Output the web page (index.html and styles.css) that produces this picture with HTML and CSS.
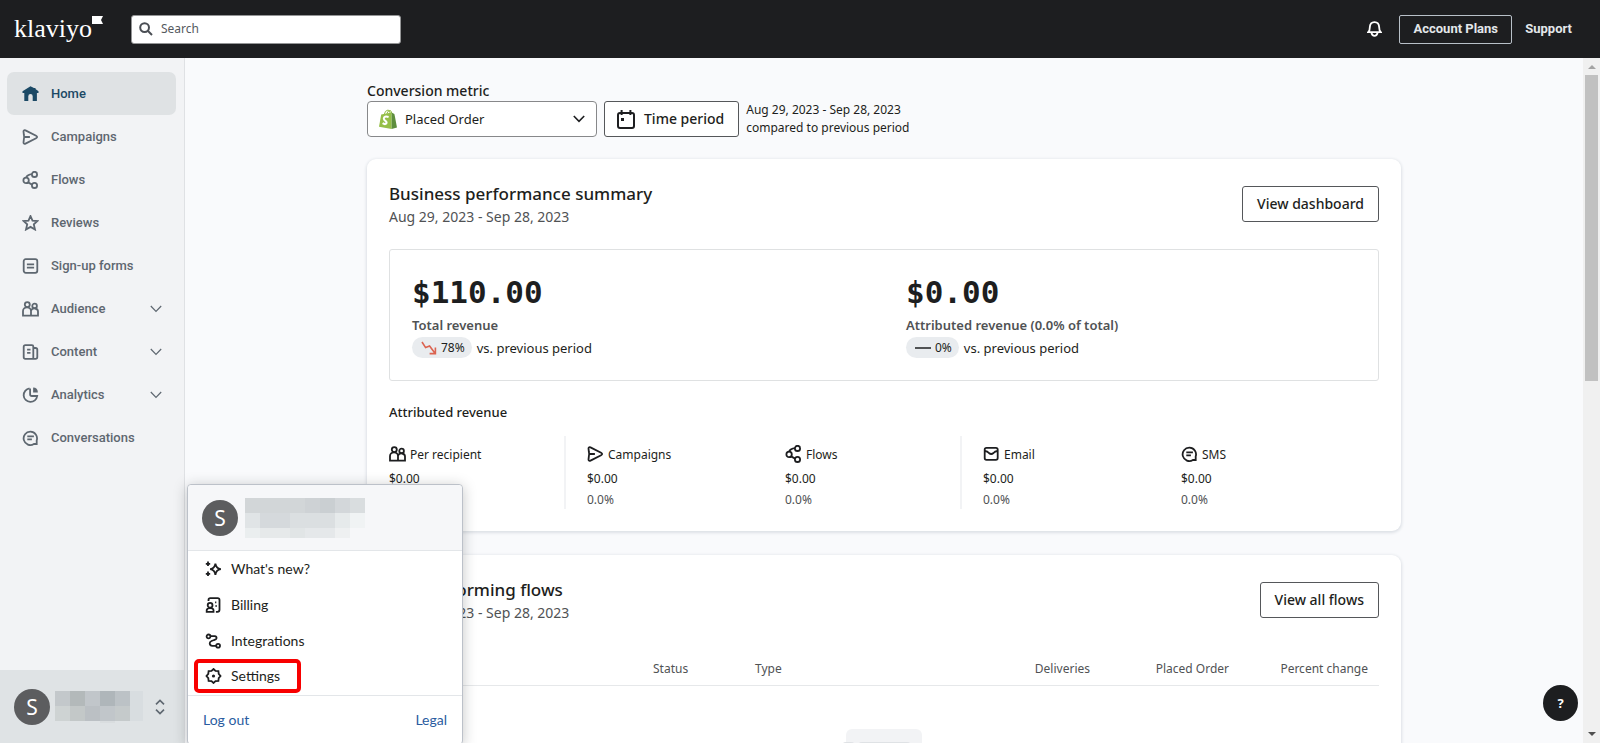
FILE: index.html
```html
<!DOCTYPE html>
<html lang="en">
<head>
    <meta charset="utf-8">
    <title>Home | Klaviyo</title>
    <link rel="stylesheet" href="styles.css">
</head>
<body>
    <!-- Icon sprite -->
    <svg class="sprite" aria-hidden="true">
        <symbol id="i-home" viewBox="0 0 16 16"><path d="M8 0.3 L11.5 2 H13 V3 L16 5.3 V7 H14.4 V15 H10.2 V10.2 a2.2 2.2 0 0 0 -4.4 0 V15 H1.8 V7 H0 V5.3 Z" fill="currentColor" stroke="none"/></symbol>
        <symbol id="i-send" viewBox="0 0 16 16"><path d="M1 2.4 C1 1.1 2 0.9 3 1.4 L13.6 6.8 C15 7.5 15 8.5 13.6 9.2 L3 14.6 C2 15.1 1 14.9 1 13.6 L1.4 10 C1.8 8.6 1.8 7.4 1.4 6 Z M1.8 8 H7.4"/></symbol>
        <symbol id="i-flows" viewBox="0 0 16 18"><circle cx="3.6" cy="9.4" r="2.7"/><circle cx="12" cy="3.4" r="2.6"/><circle cx="12" cy="14.4" r="2.6"/><path d="M3.6 6.6 Q5 3.6 9.4 3.2 M5.6 11.4 L9.6 13.6"/></symbol>
        <symbol id="i-star" viewBox="0 0 16 16"><path d="M8 1 L10 5.6 L15 6 L11.3 9.4 L12.5 14.5 L8 11.9 L3.5 14.5 L4.7 9.4 L1 6 L6 5.6 Z"/></symbol>
        <symbol id="i-form" viewBox="0 0 16 16"><rect x="1.2" y="1.2" width="13.6" height="13.6" rx="2"/><path d="M4.4 6.4 H11.6 M4.4 9.6 H11.6"/></symbol>
        <symbol id="i-people" viewBox="0 0 17 16"><circle cx="5.3" cy="3.6" r="2.5"/><circle cx="12.6" cy="4.9" r="2.3"/><path d="M1 14.6 V10 a4 3.6 0 0 1 8 0 V14.6 Z M9 14.6 H16 V10.8 a3.6 3.2 0 0 0 -7 -1.2"/></symbol>
        <symbol id="i-content" viewBox="0 0 16 16"><path d="M2.8 1.2 H9.4 Q10.8 1.2 10.8 2.6 V14.8 H2.8 Q1.2 14.8 1.2 13.2 V2.8 Q1.2 1.2 2.8 1.2 Z M10.8 4 H13 Q14.8 4 14.8 5.6 V13 Q14.8 14.8 13 14.8 H10.8 M4.6 5.6 H8 M4.6 8.8 H8"/></symbol>
        <symbol id="i-pie" viewBox="0 0 16 16"><path d="M7 1.4 A6.8 6.8 0 1 0 14.7 9 H9.4 Q7.6 9 7.6 7.2 V1.4"/><path d="M10.6 0.6 A5 5 0 0 1 15.4 5.4 H10.6 Z" fill="currentColor" stroke="none"/></symbol>
        <symbol id="i-chat" viewBox="0 0 16 16"><path d="M11.4 14 H14.2 V10.4 A6.7 6.7 0 1 0 11.4 14 Z M4.8 6.4 H11.4 M4.8 9.4 H9.4"/></symbol>
        <symbol id="i-mail" viewBox="0 0 16 16"><rect x="1.2" y="1.8" width="13" height="12" rx="1.8"/><path d="M1.4 5 Q4 5.2 5.4 7 Q7.7 9 10 7 Q11.4 5.2 14 5"/></symbol>
        <symbol id="i-down" viewBox="0 0 12 8"><path d="M0.8 1 L6 6.4 L11.2 1"/></symbol>
        <symbol id="i-sparkle" viewBox="0 0 17 16"><path d="M10.4 2.6 Q11 7.4 15.8 8.2 Q11 9 10.4 13.8 Q9.8 9 5.2 8.2 Q9.8 7.4 10.4 2.6 Z M3 0.6 V5 M0.8 2.8 H5.2 M3 10.6 V15 M0.8 12.8 H5.2"/></symbol>
        <symbol id="i-billing" viewBox="0 0 16 16"><path d="M3 4 V3 Q3 1.2 4.8 1.2 H12.2 Q14 1.2 14 3 V12.8 Q14 14.8 12 14.8 H10.4 M1.2 14.8 V13 Q1.6 11.2 4.6 11.2 Q7.8 11.2 8 13 V14.8 Z M9.6 5.4 H10.8 M10 9 H11.2"/><circle cx="4.6" cy="8.2" r="2.4"/></symbol>
        <symbol id="i-route" viewBox="0 0 16 16"><circle cx="3" cy="3.4" r="1.9"/><circle cx="12.6" cy="12.8" r="1.9"/><path d="M4.8 3.2 H9.2 Q11.4 3.4 11 5.4 Q10.8 6.6 8.6 7 L6 8 Q4 8.8 4.2 10.6 Q4.6 12.8 6.8 12.8 H10.6"/></symbol>
        <symbol id="i-gear" viewBox="0 0 16 16"><path d="M8 1 L10 2.8 L12.9 3 L13.2 5.9 L15 8 L13.2 10.1 L12.9 13 L10 13.2 L8 15 L6 13.2 L3.1 13 L2.8 10.1 L1 8 L2.8 5.9 L3.1 3 L6 2.8 Z"/><circle cx="8" cy="8" r="1.6" fill="currentColor" stroke="none"/></symbol>
    </svg>

    <header class="topbar">
        <a class="logo" href="#">klaviyo<svg class="logo-flag" viewBox="0 0 11 8"><path d="M0 0 H11 L9 4 L11 8 H0 Z" fill="#fff"/></svg></a>
        <label class="search">
            <svg class="search-icon" viewBox="0 0 14 14"><circle cx="5.6" cy="5.6" r="4.4"/><path d="M9 9 L13 13"/></svg>
            <input type="text" placeholder="Search" aria-label="Search">
        </label>
        <div class="topbar-right">
            <button class="bell" aria-label="Notifications">
                <svg viewBox="0 0 15 16"><path d="M1.2 11.2 Q2.8 9.8 2.8 6.4 Q3 1.2 7.5 1.2 Q12 1.2 12.2 6.4 Q12.2 9.8 13.8 11.2 Z M4.4 11.6 Q5 14.8 7.5 14.8 Q10 14.8 10.6 11.6"/></svg>
            </button>
            <button class="plans">Account Plans</button>
            <a class="support" href="#">Support</a>
        </div>
    </header>

    <div class="layout">
        <nav class="sidebar">
            <div class="nav-list">
                <a class="nav-item active" href="#"><svg class="icon"><use href="#i-home"/></svg>Home</a>
                <a class="nav-item" href="#"><svg class="icon"><use href="#i-send"/></svg>Campaigns</a>
                <a class="nav-item" href="#"><svg class="icon tall"><use href="#i-flows"/></svg>Flows</a>
                <a class="nav-item" href="#"><svg class="icon"><use href="#i-star"/></svg>Reviews</a>
                <a class="nav-item" href="#"><svg class="icon"><use href="#i-form"/></svg>Sign-up forms</a>
                <button class="nav-item"><svg class="icon"><use href="#i-people"/></svg>Audience<svg class="chevron"><use href="#i-down"/></svg></button>
                <button class="nav-item"><svg class="icon"><use href="#i-content"/></svg>Content<svg class="chevron"><use href="#i-down"/></svg></button>
                <button class="nav-item"><svg class="icon"><use href="#i-pie"/></svg>Analytics<svg class="chevron"><use href="#i-down"/></svg></button>
                <a class="nav-item" href="#"><svg class="icon"><use href="#i-chat"/></svg>Conversations</a>
            </div>
            <button class="account" aria-label="Account menu">
                <span class="avatar">S</span>
                <svg class="account-name" viewBox="0 0 88 32">
                    <path d="M0 0h15v15H0z" fill="#c3c8cb"/><path d="M15 0h15v15H15z" fill="#b3b9ba"/><path d="M30 0h15v15H30z" fill="#c1c6ca"/><path d="M45 0h15v15H45z" fill="#afb6ba"/><path d="M60 0h15v15H60z" fill="#bcc2c6"/><path d="M75 0h13v30H75z" fill="#d8dde0"/>
                    <path d="M0 15h15v15H0z" fill="#ced3d3"/><path d="M15 15h15v15H15z" fill="#c3c8c8"/><path d="M30 15h15v15H30z" fill="#bbc0c4"/><path d="M45 15h15v15H45z" fill="#c1c6ca"/><path d="M60 15h15v15H60z" fill="#c5cacb"/><path d="M45 30h15v2H45z" fill="#d9dddf"/>
                </svg>
                <svg class="updown" viewBox="0 0 10 16"><path d="M1 5.4 L5 1.4 L9 5.4 M1 10.6 L5 14.6 L9 10.6"/></svg>
            </button>
        </nav>

        <main class="main">
            <div class="content">
                <div class="filters">
                    <div class="filter-metric">
                        <label for="metric">Conversion metric</label>
                        <div class="select-box">
                            <svg class="shopify" viewBox="0 0 18 20">
                                <path d="M5 6 Q6 1.2 9 1 Q11 1 11.4 5" fill="none" stroke="#95bf47" stroke-width="1"/>
                                <path d="M7.6 5.6 Q8.4 1.6 11 1.4 Q12.6 1.8 12.8 4.6" fill="none" stroke="#95bf47" stroke-width="1"/>
                                <path d="M2.2 5.6 L12.6 3.6 V20 L0 17.8 Z" fill="#95bf47"/>
                                <path d="M12.6 3.6 L15.4 5 L18 18.6 L12.6 20 Z" fill="#5e8e3e"/>
                                <path d="M9.6 8 Q5 6.6 4.8 9.6 Q4.8 10.8 6.4 11.8 Q8.2 13 7.2 14.6 Q6 15.8 3.6 14.2" fill="none" stroke="#fff" stroke-width="2"/>
                            </svg>
                            <select id="metric">
                                <option>Placed Order</option>
                            </select>
                            <svg class="select-arrow"><use href="#i-down"/></svg>
                        </div>
                    </div>
                    <button class="btn">
                        <svg class="calendar" viewBox="0 0 18 19"><rect x="1" y="3" width="16" height="15" rx="2"/><path d="M4.6 0 V5 M13.4 0 V5"/><path d="M4 8h3v3H4z" fill="currentColor" stroke="none"/></svg>
                        Time period
                    </button>
                    <p class="period">Aug 29, 2023 - Sep 28, 2023<br>compared to previous period</p>
                </div>

                <section class="card">
                    <div class="card-head">
                        <div>
                            <h2>Business performance summary</h2>
                            <p class="dates">Aug 29, 2023 - Sep 28, 2023</p>
                        </div>
                        <button class="btn">View dashboard</button>
                    </div>
                    <div class="totals">
                        <div class="total">
                            <div class="amount">$110.00</div>
                            <div class="total-label">Total revenue</div>
                            <div class="compare">
                                <span class="badge"><svg class="trend down" viewBox="0 0 16 14"><path d="M1 1 L4.6 6.6 L8.6 5 L13.6 11.8 M14.4 6.4 V12.6 H8.6"/></svg>78%</span>
                                vs. previous period
                            </div>
                        </div>
                        <div class="total">
                            <div class="amount">$0.00</div>
                            <div class="total-label">Attributed revenue (0.0% of total)</div>
                            <div class="compare">
                                <span class="badge"><svg class="trend" viewBox="0 0 16 14"><path d="M0 7 H16"/></svg>0%</span>
                                vs. previous period
                            </div>
                        </div>
                    </div>
                    <h3>Attributed revenue</h3>
                    <div class="channels">
                        <div class="channel divided">
                            <div class="channel-name"><svg class="icon"><use href="#i-people"/></svg>Per recipient</div>
                            <div>$0.00</div>
                        </div>
                        <div class="channel">
                            <div class="channel-name"><svg class="icon"><use href="#i-send"/></svg>Campaigns</div>
                            <div>$0.00</div>
                            <div class="share">0.0%</div>
                        </div>
                        <div class="channel divided">
                            <div class="channel-name"><svg class="icon tall"><use href="#i-flows"/></svg>Flows</div>
                            <div>$0.00</div>
                            <div class="share">0.0%</div>
                        </div>
                        <div class="channel">
                            <div class="channel-name"><svg class="icon"><use href="#i-mail"/></svg>Email</div>
                            <div>$0.00</div>
                            <div class="share">0.0%</div>
                        </div>
                        <div class="channel">
                            <div class="channel-name"><svg class="icon"><use href="#i-chat"/></svg>SMS</div>
                            <div>$0.00</div>
                            <div class="share">0.0%</div>
                        </div>
                    </div>
                </section>

                <section class="card">
                    <div class="card-head">
                        <div>
                            <h2>Top performing flows</h2>
                            <p class="dates">Aug 29, 2023 - Sep 28, 2023</p>
                        </div>
                        <button class="btn">View all flows</button>
                    </div>
                    <table class="flows">
                        <thead>
                            <tr>
                                <th class="col-name">Flow</th>
                                <th class="col-status">Status</th>
                                <th>Type</th>
                                <th class="num">Deliveries</th>
                                <th class="num">Placed Order</th>
                                <th class="num">Percent change</th>
                            </tr>
                        </thead>
                    </table>
                    <svg class="empty" viewBox="0 0 84 60"><rect x="4" width="76" height="60" rx="6" fill="#f2f3f5"/><rect y="13" width="13" height="12" rx="4" fill="#dfe2e5"/><rect x="16" y="13" width="53" height="12" rx="4" fill="#dfe2e5"/></svg>
                </section>
            </div>
            <button class="help" aria-label="Help">?</button>
        </main>

        <div class="scrollbar">
            <svg class="arrow up" viewBox="0 0 8 4"><path d="M0 4 L4 0 L8 4 Z"/></svg>
            <div class="thumb"></div>
            <svg class="arrow" viewBox="0 0 8 4"><path d="M0 0 L4 4 L8 0 Z"/></svg>
        </div>
    </div>

    <div class="menu">
        <div class="menu-head">
            <span class="avatar">S</span>
            <svg class="menu-name" viewBox="0 0 120 40">
                <path d="M0 0h60v15H0z" fill="#d2d6d8"/><path d="M60 0h15v15H60z" fill="#ced2d5"/><path d="M75 0h15v15H75z" fill="#cacfd2"/><path d="M90 0h15v15H90z" fill="#d3d7da"/><path d="M105 0h15v15h-15z" fill="#d9dddf"/>
                <path d="M0 15h15v15H0z" fill="#e0e4e6"/><path d="M15 15h30v15H15z" fill="#d5d9dc"/><path d="M45 15h45v15H45z" fill="#dbdfe1"/><path d="M90 15h15v15H90z" fill="#e6eaeb"/><path d="M105 15h15v15h-15z" fill="#f0f3f4"/>
                <path d="M0 30h15v10H0z" fill="#eaeeef"/><path d="M15 30h30v10H15z" fill="#e6e9ea"/><path d="M45 30h15v10H45z" fill="#e1e5e6"/><path d="M60 30h30v10H60z" fill="#e5e8ea"/><path d="M90 30h15v10H90z" fill="#eef0f1"/>
            </svg>
        </div>
        <div class="menu-list">
            <a href="#"><svg class="icon"><use href="#i-sparkle"/></svg>What's new?</a>
            <a href="#"><svg class="icon"><use href="#i-billing"/></svg>Billing</a>
            <a href="#"><svg class="icon"><use href="#i-route"/></svg>Integrations</a>
            <a class="highlight" href="#"><svg class="icon"><use href="#i-gear"/></svg>Settings</a>
        </div>
        <div class="menu-foot">
            <a href="#">Log out</a>
            <a href="#">Legal</a>
        </div>
    </div>
</body>
</html>
```
FILE: styles.css
```css
* {
    box-sizing: border-box;
}

body {
    margin: 0;
    height: 100vh;
    display: flex;
    flex-direction: column;
    position: relative;
    overflow: hidden;
    font-family: "Noto Sans", sans-serif;
    font-size: 13px;
    line-height: 20px;
    color: #1d1e20;
    background: #f9fafc;
}

h2, h3, p {
    margin: 0;
}

a {
    color: inherit;
    text-decoration: none;
}

button {
    font: inherit;
    color: inherit;
    cursor: pointer;
}

svg {
    flex: none;
    fill: none;
    stroke: none;
}

.sprite {
    position: absolute;
    width: 0;
    height: 0;
}

.icon {
    width: 17px;
    height: 16px;
    stroke: currentColor;
    stroke-width: 1.8;
}

.icon.tall {
    height: 18px;
}

/* Top bar */
.topbar {
    flex: none;
    height: 58px;
    display: flex;
    align-items: center;
    padding: 0 28px 0 14px;
    background: #1d1e20;
    color: #fff;
}

.logo {
    display: flex;
    width: 117px;
    font-family: "Liberation Serif", serif;
    font-size: 26px;
    line-height: 26px;
}

.logo-flag {
    width: 11px;
    height: 8px;
}

.search {
    display: flex;
    align-items: center;
    gap: 8px;
    width: 270px;
    height: 29px;
    padding: 0 7px;
    background: #fff;
    border: 1px solid #949596;
    border-radius: 3px;
}

.search-icon {
    width: 14px;
    height: 14px;
    stroke: #4a4e54;
    stroke-width: 2;
}

.search input {
    flex: 1;
    min-width: 0;
    padding: 0;
    border: 0;
    outline: 0;
    font: inherit;
    font-size: 12px;
}

.search input::placeholder {
    color: #55595e;
}

.topbar-right {
    display: flex;
    align-items: center;
    gap: 13px;
    margin-left: auto;
    font-family: Roboto, sans-serif;
    font-weight: 700;
    color: #e3e7ea;
}

.bell {
    display: flex;
    padding: 0;
    margin-right: 4px;
    border: 0;
    background: none;
}

.bell svg {
    width: 15px;
    height: 16px;
    stroke: #fff;
    stroke-width: 1.8;
}

.plans {
    width: 113px;
    height: 29px;
    padding: 0;
    border: 1px solid #b8c0c8;
    border-radius: 2px;
    background: none;
}

/* Sidebar */
.layout {
    flex: 1;
    min-height: 0;
    display: flex;
}

.sidebar {
    flex: none;
    width: 185px;
    display: flex;
    flex-direction: column;
    justify-content: space-between;
    background: #f2f3f5;
    border-right: 1px solid #dfe1e4;
    font-family: Roboto, sans-serif;
}

.nav-list {
    display: flex;
    flex-direction: column;
    padding: 14px 8px 0 7px;
}

.nav-item {
    display: flex;
    align-items: center;
    gap: 12px;
    height: 43px;
    padding: 0 14px 0 15px;
    border: 0;
    border-radius: 7px;
    background: none;
    color: #5e6770;
    font-weight: 500;
}

.nav-item.active {
    background: #dfe2e4;
    color: #1b4965;
}

.chevron {
    width: 12px;
    height: 8px;
    margin-left: auto;
    stroke: #5e6770;
    stroke-width: 1.2;
}

.account {
    display: flex;
    align-items: center;
    height: 73px;
    padding: 0 14px;
    border: 0;
    background: #dfe3e5;
}

.avatar {
    flex: none;
    width: 36px;
    height: 36px;
    border-radius: 50%;
    background: #5c5d5f;
    color: #fff;
    font-family: "Noto Sans", sans-serif;
    font-size: 21px;
    line-height: 36px;
    text-align: center;
}

.account-name {
    width: 88px;
    height: 32px;
    margin-left: 5px;
}

.updown {
    width: 10px;
    height: 16px;
    margin-left: 12px;
    stroke: #5e6770;
    stroke-width: 1.6;
}

/* Main column */
.main {
    flex: 1;
    min-width: 0;
    position: relative;
    overflow: hidden;
}

.content {
    max-width: 1034px;
    margin: 0 auto;
    padding-top: 22px;
}

.filters {
    display: flex;
    align-items: flex-end;
    gap: 7px;
    margin-bottom: 22px;
}

.filter-metric label {
    display: block;
    line-height: 21px;
    font-weight: 500;
    font-size: 14px;
}

.select-box {
    display: flex;
    align-items: center;
    gap: 8px;
    width: 230px;
    height: 36px;
    padding: 0 11px;
    border: 1px solid #87888a;
    border-radius: 4px;
    background: #fff;
}

.shopify {
    width: 18px;
    height: 20px;
}

.select-box select {
    flex: 1;
    min-width: 0;
    padding: 0;
    border: 0;
    appearance: none;
    background: none;
    font: inherit;
    font-size: 13px;
    color: inherit;
}

.select-arrow {
    width: 12px;
    height: 8px;
    stroke: #1d1e20;
    stroke-width: 1.6;
}

.btn {
    display: flex;
    align-items: center;
    gap: 9px;
    height: 36px;
    padding: 0 14px;
    border: 1px solid #55575a;
    border-radius: 3px;
    background: #fff;
    font-size: 14px;
    font-weight: 500;
}

.filters .btn {
    padding: 0 14px 0 12px;
}

.calendar {
    width: 18px;
    height: 19px;
    stroke: currentColor;
    stroke-width: 2;
}

.period {
    font-size: 12px;
    line-height: 18px;
}

.card {
    margin-bottom: 24px;
    padding: 22px;
    min-height: 371px;
    background: #fff;
    border-radius: 9px;
    box-shadow: 0 1px 3px 1px #dde1e6;
}

.card-head {
    display: flex;
    justify-content: space-between;
    align-items: flex-start;
}

.card-head h2 {
    font-size: 17px;
    font-weight: 500;
    line-height: 25px;
}

.dates {
    font-size: 14px;
    line-height: 21px;
    color: #505254;
}

.card-head .btn {
    margin-top: 5px;
}

.totals {
    display: grid;
    grid-template-columns: 1fr 1fr;
    margin-top: 22px;
    border: 1px solid #dfe1e2;
    border-radius: 3px;
}

.total {
    padding: 22px;
}

.amount {
    font-family: "DejaVu Sans Mono", monospace;
    font-size: 31px;
    font-weight: 700;
    line-height: 41px;
}

.total-label {
    font-weight: 600;
    line-height: 24px;
    color: #505254;
}

.compare {
    display: flex;
    align-items: center;
    gap: 5px;
}

.badge {
    display: flex;
    align-items: center;
    gap: 4px;
    padding: 0 7px 0 9px;
    border-radius: 11px;
    background: #e9ecef;
    font-size: 12px;
    line-height: 21px;
}

.trend {
    width: 16px;
    height: 14px;
    stroke: #505254;
    stroke-width: 2;
}

.trend.down {
    stroke: #db6350;
    stroke-width: 1.6;
}

h3 {
    margin-top: 21px;
    font-size: 13px;
    font-weight: 500;
    line-height: 20px;
}

.channels {
    display: grid;
    grid-template-columns: repeat(5, 1fr);
    margin-top: 14px;
    font-size: 12px;
    line-height: 21px;
}

.channel {
    height: 73px;
    margin-right: 21px;
}

.channel.divided {
    border-right: 2px solid #f2f3f5;
}

.channel-name {
    display: flex;
    align-items: center;
    gap: 4px;
    height: 32px;
    padding-top: 4px;
}

.share {
    color: #505254;
}

.flows {
    width: 100%;
    margin-top: 36px;
    table-layout: fixed;
    border-collapse: collapse;
    border-bottom: 1px solid #e6e8ea;
    font-size: 12px;
    color: #505254;
}

.flows th {
    padding: 0 11px 6px;
    font-weight: 400;
    text-align: left;
}

.flows .col-name {
    width: 253px;
}

.flows .col-status {
    width: 102px;
}

.flows .num {
    width: 139px;
    text-align: right;
}

.empty {
    display: block;
    width: 84px;
    height: 60px;
    margin: 43px auto 0;
}

.help {
    position: absolute;
    right: 5px;
    bottom: 22px;
    width: 35px;
    height: 36px;
    padding: 0;
    border: 0;
    border-radius: 50%;
    background: #1d1e20;
    color: #fff;
    font-weight: 700;
}

/* Scroll bar */
.scrollbar {
    flex: none;
    width: 17px;
    display: flex;
    flex-direction: column;
    align-items: center;
    padding: 7px 0;
    background: #f0f0f0;
}

.thumb {
    width: 13px;
    height: 306px;
    margin: 6px 0 auto;
    background: #c1c1c1;
}

.arrow {
    width: 8px;
    height: 4px;
    fill: #505050;
}

.arrow.up {
    fill: #a3a3a3;
}

/* Account menu, opens over the page */
.menu {
    position: absolute;
    left: 187px;
    bottom: -2px;
    width: 276px;
    border: 1px solid #bcc1c9;
    border-radius: 4px;
    background: #fff;
    box-shadow: 0 2px 14px rgba(29, 30, 32, 0.25);
    font-family: Lato, sans-serif;
    font-size: 14px;
}

.menu-head {
    display: flex;
    align-items: center;
    gap: 7px;
    height: 66px;
    padding: 0 14px;
    border-bottom: 1px solid #e3e6e9;
    border-radius: 4px 4px 0 0;
    background: #f6f7f9;
}

.menu-name {
    width: 120px;
    height: 40px;
}

.menu-list {
    display: flex;
    flex-direction: column;
    align-items: flex-start;
    padding: 0 6px 2px;
    border-bottom: 1px solid #e3e6e9;
}

.menu-list a {
    display: flex;
    align-items: center;
    gap: 9px;
    height: 36px;
    padding: 0 11px;
}

.menu-list .highlight {
    height: 34px;
    padding: 0 17px 0 7px;
    border: 4px solid #f80000;
    border-radius: 5px;
}

.menu-foot {
    display: flex;
    justify-content: space-between;
    padding: 14px 15px;
    color: #2a5ca0;
}
```
